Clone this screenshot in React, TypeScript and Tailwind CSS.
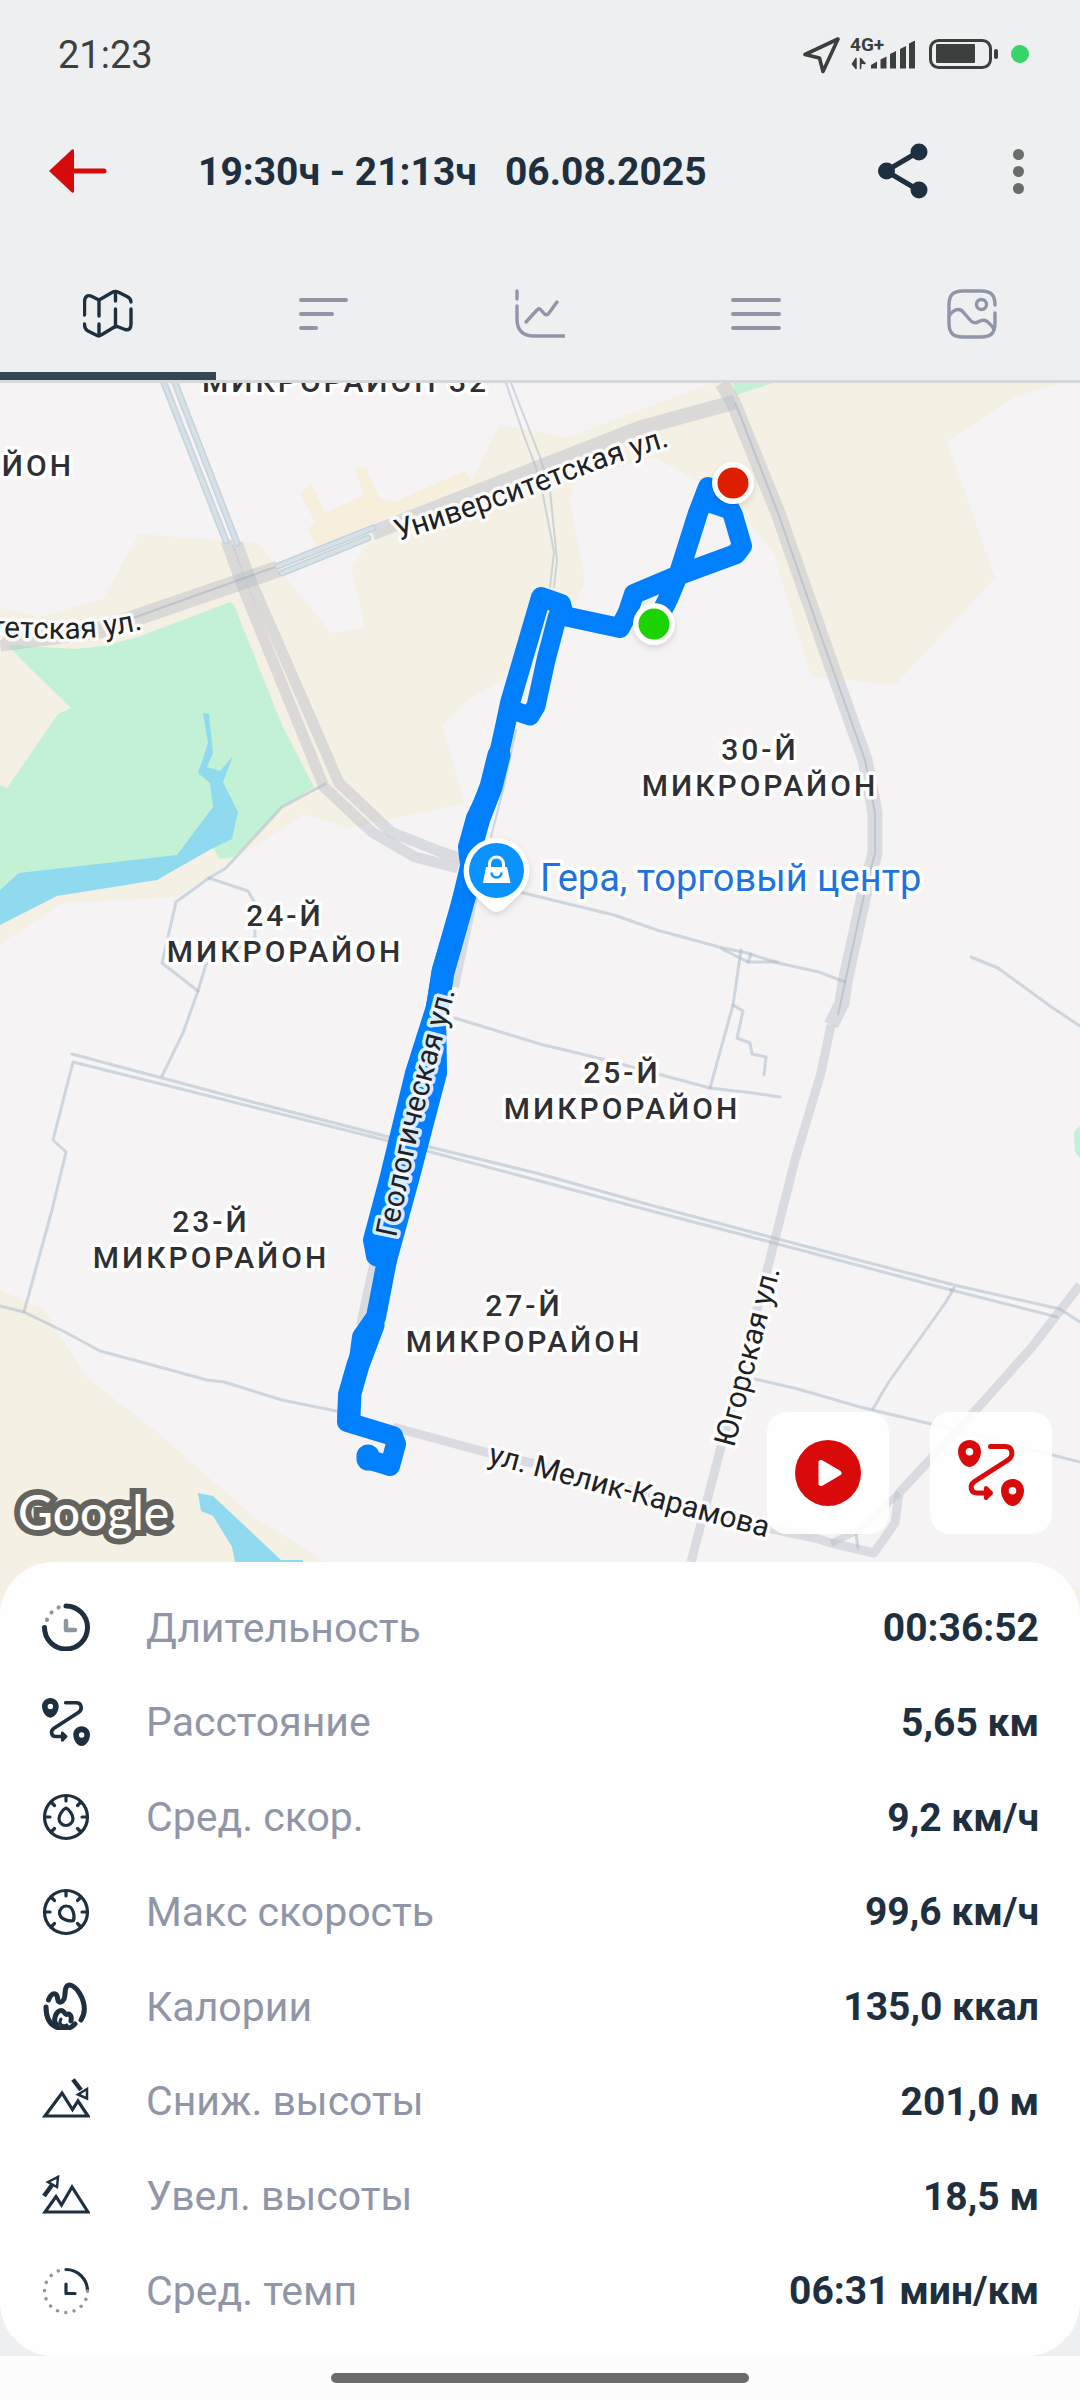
import { useState } from 'react';
import type { FC, ReactNode } from 'react';

interface IconProps {
  className?: string;
}

const StatusIcons: FC<IconProps> = ({ className }) => (
  <svg className={className} viewBox="0 0 226 48" fill="currentColor">
    <path d="M2 24.5 35 9 20 41.5 16.5 28Z" fill="none" stroke="currentColor" strokeWidth="3.6" strokeLinejoin="round" />
    <text className="text-[19px] font-bold" x="47" y="21">4G+</text>
    <path d="M53 28.5V38.5L49.5 34ZM57.5 38.5V28.5L62 33.5 58 33Z" stroke="currentColor" strokeWidth="1.5" strokeLinejoin="round" />
    <path d="M68 38.5V35L74 31.5V38.5ZM77.5 38.5V29.5L83.5 26.5V38.5ZM87 38.5V24L93 21V38.5ZM97 38.5V19L103 16V38.5ZM106 38.5V13.5L112 10.5V38.5Z" />
    <rect x="127.5" y="10.5" width="60" height="27" rx="8" fill="none" stroke="currentColor" strokeWidth="3" />
    <rect x="133" y="14" width="39" height="19" rx="1" />
    <rect x="191" y="19" width="4" height="10" rx="2" />
    <circle cx="217" cy="24" r="9" fill="#36d469" />
  </svg>
);

const BackIcon: FC<IconProps> = ({ className }) => (
  <svg className={className} viewBox="0 0 60 48" fill="#d60a0a">
    <path d="M1 24 24 2.5Q26 1.5 26 4V44Q26 46.5 24 45.5Z" />
    <path d="M24 24H56" stroke="#d60a0a" strokeWidth="5" strokeLinecap="round" />
  </svg>
);

const ShareIcon: FC<IconProps> = ({ className }) => (
  <svg className={className} viewBox="0 0 56 56" fill="currentColor">
    <path d="M43 8.5 10 28 43 47.5" fill="none" stroke="currentColor" strokeWidth="5" />
    <circle cx="43" cy="9" r="8.5" />
    <circle cx="10.5" cy="28" r="8.5" />
    <circle cx="43" cy="47" r="8.5" />
  </svg>
);

const RouteIcon: FC<IconProps> = ({ className }) => (
  <svg className={className} viewBox="0 0 66 66" fill="currentColor" stroke="none">
    <path fillRule="evenodd" d="M11.5 0C18 0 23 5 23 11.5 23 18 18 27 11.5 27S0 18 0 11.5C0 5 5 0 11.5 0Zm0 8a3.8 3.8 0 1 0 0 7.6 3.8 3.8 0 0 0 0-7.6Z" />
    <path fillRule="evenodd" d="M54.5 39C61 39 66 44 66 50.5 66 57 61 66 54.5 66S43 57 43 50.5C43 44 48 39 54.5 39Zm0 8a3.8 3.8 0 1 0 0 7.6 3.8 3.8 0 0 0 0-7.6Z" />
    <path d="M32.5 6.5H47C55 6.5 56 16 50 20L16.5 41.5C11 45.5 12.5 53 19 53H28" fill="none" stroke="currentColor" strokeWidth="5" strokeLinecap="round" />
    <path d="M28 48 33 53 28 58Z" stroke="currentColor" strokeWidth="4" strokeLinejoin="round" />
  </svg>
);

const tabs: { id: string; label: string; icon: ReactNode }[] = [
  {
    id: 'map',
    label: 'Карта',
    icon: (
      <>
        <path d="M1.5 26V13C1.5 7 5 5.5 9 7.5L16 11 29 3.5Q32 1.5 35 3L44 7.5Q48 9.5 48 13" />
        <path d="M48 20V35Q48 42 42 40.5L33 37 19 45.5Q16 47.5 13 46L5 42Q1.5 40 1.5 35" />
        <path d="M16 11V27M16 35V47M32.5 3V12M32.5 20V38" />
      </>
    ),
  },
  { id: 'laps', label: 'Отрезки', icon: <path strokeWidth="4" d="M2 11H47M2 25H33M2 39H17" /> },
  {
    id: 'chart',
    label: 'График',
    icon: (
      <>
        <path d="M2 2V10M2 17V30Q2 47 19 47H49" />
        <path d="M11 33 22 21Q24 18.5 26 21L29.5 25Q32 27 34 24L42 13" />
      </>
    ),
  },
  { id: 'list', label: 'Список', icon: <path strokeWidth="4" d="M2 11H48M2 25H48M2 39H48" /> },
  {
    id: 'photo',
    label: 'Фото',
    icon: (
      <>
        <path d="M48 16C48 6 44 2 34 2H16C6 2 2 6 2 16V34C2 44 6 48 16 48H34C44 48 48 44 48 34V24" />
        <circle cx="34.5" cy="15.5" r="5" />
        <path d="M2 27C7 20 13 18 17 24L24 32Q28 35 31 33C38 29 41 32 47 40" />
      </>
    ),
  },
];

const gaugeFace = (
  <>
    <circle cx="24" cy="24" r="21.5" />
    <path d="M24 3V8M45 24H40M3 24H8M39 9 35.5 12.5M9 9 12.5 12.5M39 39 35.5 35.5M9 39 12.5 35.5" />
  </>
);

const stats: { label: string; value: string; icon: ReactNode }[] = [
  {
    label: 'Длительность',
    value: '00:36:52',
    icon: (
      <>
        <path d="M24 3A21.5 21.5 0 1 1 2.5 24.5" strokeWidth="5" />
        <path d="M5 16.5V17M9.5 9.5 9.6 9.4M16.5 4.5 16.7 4.4" stroke="#8d959e" strokeWidth="4" />
        <path d="M24 18V27H33" stroke="#8d959e" strokeWidth="4.5" />
      </>
    ),
  },
  { label: 'Расстояние', value: '5,65 км', icon: <RouteIcon className="w-12 h-12" /> },
  {
    label: 'Сред. скор.',
    value: '9,2 км/ч',
    icon: (
      <>
        {gaugeFace}
        <path d="M24 15C27 16 31 22 31 25.5A7 7 0 0 1 17 25.5C17 22 21 16 24 15Z" />
      </>
    ),
  },
  {
    label: 'Макс скорость',
    value: '99,6 км/ч',
    icon: (
      <>
        {gaugeFace}
        <path d="M31.5 32.5C27 34 17.5 31 17.5 25A7 7 0 0 1 25 18C31 18 33 28 31.5 32.5Z" />
      </>
    ),
  },
  {
    label: 'Калории',
    value: '135,0 ккал',
    icon: (
      <>
        <path d="M6.5 18C10 9 15 11 15.5 16 16 22 20 21 22 17 24 13 22 7 25 4 28 1 34 5 38 12 43 21 44 30 39 38" strokeWidth="5" />
        <path d="M4 25C4 35 7 42 14 45 21 48 29 47 33 42" strokeWidth="5" />
        <path d="M15 43C10 39 14 29 19 28.5 22 28 22 32 24.5 32.5 28 31 30 34 29 39" strokeWidth="5" />
        <path d="M19 37C16 42 20 45 25 43" strokeWidth="3" />
      </>
    ),
  },
  {
    label: 'Сниж. высоты',
    value: '201,0 м',
    icon: (
      <g strokeLinecap="butt" strokeLinejoin="miter">
        <path d="M3 39H46L36 24 30.5 32.5 20 16Z" />
        <path d="M31 2.5 39 13" strokeWidth="4.5" />
        <path d="M36 17.5 45 12V21.5Z" strokeWidth="2.5" />
      </g>
    ),
  },
  {
    label: 'Увел. высоты',
    value: '18,5 м',
    icon: (
      <g strokeLinecap="butt" strokeLinejoin="miter">
        <path d="M3 40H46L30 15 19.5 33 14 24.5Z" />
        <path d="M2 24 10 13" strokeWidth="4.5" />
        <path d="M6 10 16 5 15 15Z" strokeWidth="2.5" />
      </g>
    ),
  },
  {
    label: 'Сред. темп',
    value: '06:31 мин/км',
    icon: (
      <>
        <path d="M24 2.5A21.5 21.5 0 0 1 45.5 24" />
        <path d="M45.5 24A21.5 21.5 0 1 1 24 2.5" stroke="#8d959e" strokeWidth="3.4" strokeDasharray="0.1 8.34" strokeDashoffset="-8.4" />
        <path d="M24 17V26.5H33" />
      </>
    ),
  },
];

const districts = [
  { name: '30-Й', x: 760, y: 760 },
  { name: '24-Й', x: 285, y: 926 },
  { name: '25-Й', x: 622, y: 1083 },
  { name: '23-Й', x: 211, y: 1232 },
  { name: '27-Й', x: 524, y: 1316 },
];

const minorRoads = [
  '72,1054 241,1099 389,1137 540,1174 643,1203 774,1238 954,1285 1060,1309 1080,1322',
  '951,1290 774,1243 640,1208 540,1181 389,1141 73,1062 53,1140 66,1152 52,1210 24,1312',
  '951,1290 1057,1317',
  '325,784 282,807 226,868 209,878 176,902 162,963 198,991',
  '209,878 248,891 255,903 255,937 238,948 206,964 198,991 183,1033 162,1076',
  '516,891 540,897 614,915 657,930 719,947 747,953 778,963 819,972 845,982',
  '722,949 748,962 778,962',
  '741,950 733,1005 710,1088',
  '733,1005 743,1011 737,1038 750,1043 752,1054 766,1057 764,1075',
  '751,954 748,962',
  '455,1018 540,1044 602,1059 710,1088 753,1093 780,1097',
  '971,957 998,968 1050,1006 1080,1026',
  '0,1306 24,1312 65,1332 100,1351 145,1363 207,1380 224,1382 282,1400 336,1411',
  '755,1379 798,1389 860,1407 931,1424 1080,1462',
  '873,1409 888,1383 946,1302 954,1288',
  '856,1533 858,1548',
];

const RouteMap: FC = () => (
  <svg className="block w-full h-auto" viewBox="0 383 1080 1233" role="img" aria-label="Карта маршрута">
    <rect y="383" width="1080" height="1233" fill="#f5f3f4" />

    {/* Land use */}
    <g fill="#f4f0e4">
      <path d="M0 608 40 617 103 599 139 534 257 543 265 552 331 633 365 628 352 569 365 547 400 510 473 480 499 425 540 432 566 438 712 383H1060L1015 397 947 441 995 578 895 685 811 676 774 555 748 520 697 480 654 457 576 480 569 497 585 581 560 640 509 675 468 700 442 725 461 790 465 803 350 828 304 814 230 862 177 897 62 903 0 944Z" />
      <path d="M0 1290 45 1310 57 1330 86 1377 158 1433 255 1518 327 1562V1616H0Z" />
      <path d="M1068 1583 1080 1590V1616H1068Z" />
    </g>
    <path fill="#f7efdc" d="M300 493 312 484 325 513 364 495 355 468H366L379 498 394 502 465 471 473 482 316 547 308 528 316 524Z" />
    <g fill="#c3f1d5">
      <path d="M7 645 76 649 103 646 138 637 230 602 234 605 282 725 314 787 282 807 234 857 220 859 213 848 150 870 0 910V785L7 788 58 714 71 708 34 672Z" />
      <path d="M733 383H773L736 395Z" />
      <path d="M1080 1126 1074 1132 1075 1152 1080 1158Z" />
    </g>
    <g fill="#8fdaee">
      <path d="M203 713 209 714 213 753 207 767 220 771 233 756 223 782 238 812 232 839 213 848 157 880 57 896 0 925V890L19 873 177 855 213 807 210 783 198 773 208 743Z" />
      <path d="M198 1493 213 1496 281 1560H303V1562H235L232 1547 213 1516 201 1511Z" />
    </g>

    {/* Roads */}
    <g fill="none" stroke="#a8b8c8" strokeOpacity="0.5" strokeWidth="3" strokeLinecap="round" strokeLinejoin="round">
      {minorRoads.map((points) => (
        <polyline key={points} points={points} />
      ))}
      <path strokeWidth="2" d="M506 383 523 433 535 465 542 490 554 552 550 587M511 383 540 457 550 490 557 560 554 587M516 730 503 790 491 837" />
    </g>
    <g fill="none" stroke="#b4bac6" strokeOpacity="0.42" strokeLinejoin="round">
      <path strokeWidth="11" d="M226 541 241 583 324 787 372 832 415 857 458 868" />
      <path strokeWidth="11" d="M237 543 252 583 339 783 391 832 441 852 460 858" />
      <path strokeWidth="17" d="M0 643 100 630 278 569" />
      <path strokeWidth="15" d="M372 533 540 467 640 428 735 402" />
      <path strokeWidth="15" d="M722 383 733 402 778 513 833 670 865 760 875 813V853L864 895 845 982 842 1003 831 1025" />
      <path strokeWidth="9" d="M831 1025 821 1073 795 1160 769 1263 721 1447 691 1562" />
      <path strokeWidth="9" d="M393 1427 496 1455 540 1465 767 1528 815 1538 831 1543 874 1553 895 1523 899 1493 976 1410 1032 1347 1080 1285" />
      <path strokeWidth="7" d="M899 1493 860 1530 831 1543" />
      <path strokeWidth="8" d="M484 850 455 987M373 1265 360 1325" />
      <path stroke="#9aa6ba" strokeWidth="2" d="M735 402 778 513 833 670 865 760 875 813V853L864 895 838 1015M133 618 278 566" />
    </g>
    <g fill="none" strokeLinecap="round">
      <path stroke="#c6d2db" strokeWidth="7" d="M164 383 226 541M175 383 237 543M278 566 373 528M282 573 368 538" />
      <path stroke="#d6e0e7" strokeWidth="4" d="M164 383 226 541M175 383 237 543M278 566 373 528M282 573 368 538" />
    </g>

    {/* District labels */}
    <g className="font-medium text-[30px] tracking-widest" fill="#2f3033" stroke="#fff" strokeWidth="7" strokeLinejoin="round" paintOrder="stroke">
      <text x="202" y="392">МИКРОРАЙОН 32</text>
      <text x="74" y="476" textAnchor="end">МИКРОРАЙОН</text>
      {districts.map((d) => (
        <text key={d.name} textAnchor="middle" y={d.y}>
          <tspan x={d.x}>{d.name}</tspan>
          <tspan x={d.x} dy="36">МИКРОРАЙОН</tspan>
        </text>
      ))}
    </g>

    {/* Recorded track */}
    <g fill="none" stroke="#0080ff" strokeWidth="20" strokeLinecap="round" strokeLinejoin="round">
      <path d="M660 615 669 597 679 573 698 513 708 487 725 500 733 515 742 546 736 554 679 575 634 594 628 612 620 628 564 616 561 604 541 597 510 703 505 727 492 785 476 818 468 847 470 866 459 913 442 970 436 1007 415 1073 389 1180 373 1240 376 1256 387 1260 376 1317 362 1337 358 1367 348 1395 347 1422 393 1436 396 1444 390 1466 370 1460" />
      <path strokeWidth="19" d="M561 608 557 618 546 660 536 706 530 716 512 710" />
      <path d="M436 1007 437 1073 409 1180 387 1260" />
      <path strokeWidth="23" d="M499 755 491 787 479 818 471 847M469 880 459 916 443 972 437 1010M427 1050 398 1180M373 1325 358 1365 350 1393 349 1417M708 492 716 502" />
      <path strokeWidth="17" d="M398 1180 384 1238M706 503 724 509" />
      <path strokeWidth="23" d="M368 1456 368 1459" />
    </g>

    {/* Street names */}
    <defs>
      <path id="street-west" d="M-150 625Q-40 637 60 639 105 639 143 629" />
      <path id="street-north" d="M398 541Q485 513 555 486 615 462 690 440" />
      <path id="street-geo" d="M396 1238 420 1124Q436 1064 458 980" />
      <path id="street-ugra" d="M734 1448 782 1262" />
      <path id="street-melik" d="M487 1463 780 1541" />
    </defs>
    <g className="text-[30px]" fill="#202124" stroke="#fff" strokeWidth="7" strokeOpacity="0.85" strokeLinejoin="round" paintOrder="stroke">
      <text textAnchor="end"><textPath href="#street-west" startOffset="100%">Университетская ул.</textPath></text>
      <text><textPath href="#street-north">Университетская ул.</textPath></text>
      <text><textPath href="#street-geo">Геологическая ул.</textPath></text>
      <text><textPath href="#street-ugra">Югорская ул.</textPath></text>
      <text><textPath href="#street-melik">ул. Мелик-Карамова</textPath></text>
    </g>
    <text className="text-[38px]" x="540" y="891" fill="#1f73de" stroke="#fff" strokeWidth="7" strokeLinejoin="round" paintOrder="stroke">
      Гера, торговый центр
    </text>

    {/* Markers */}
    <g className="drop-shadow-md">
      <circle cx="654" cy="624" r="21" fill="#fff" />
      <circle cx="733" cy="483" r="21" fill="#fff" />
      <path fill="#fff" d="M496.5 838A33 33 0 0 1 520 894L504 909Q496.5 915 489 909L473 894A33 33 0 0 1 496.5 838Z" />
    </g>
    <circle cx="654" cy="624" r="15.5" fill="#1bd300" />
    <circle cx="733" cy="483" r="15.5" fill="#dd1f00" />
    <circle cx="496.5" cy="870.5" r="27.5" fill="#0a93ff" />
    <path fill="#fff" d="M486 867H507L510.5 883H483Z" />
    <path fill="none" stroke="#fff" strokeWidth="3" d="M489.5 868V864A7 7 0 0 1 503.5 864V868" />
    <path fill="none" stroke="#0a93ff" strokeWidth="2.5" d="M491.5 872.5A5 5 0 0 0 501.5 872.5" />

    <text className="font-[Lato,sans-serif] text-[48px] font-medium" x="18" y="1530" fill="#fff" stroke="#64635d" strokeWidth="12" paintOrder="stroke">
      Google
    </text>
  </svg>
);

const App: FC = () => {
  const [activeTab, setActiveTab] = useState('map');

  return (
    <div className="min-h-screen flex flex-col bg-[#edeff1] text-[#1e2f3f] font-[Roboto,sans-serif]">
      {/* Status bar */}
      <div className="h-[108px] pl-[58px] pr-[51px] flex items-center justify-between text-[#3d3f3e]">
        <span className="pt-0.5 text-[38px]">21:23</span>
        <StatusIcons className="w-[226px] h-12" />
      </div>

      {/* Toolbar */}
      <header className="h-[126px] pl-12 pr-[54px] flex items-center">
        <button type="button" aria-label="Назад">
          <BackIcon className="w-[60px] h-12" />
        </button>
        <h1 className="flex-1 pl-[90px] pt-0.5 flex gap-7 text-[39px] font-bold whitespace-nowrap">
          <span>19:30ч - 21:13ч</span>
          <span>06.08.2025</span>
        </h1>
        <button type="button" aria-label="Поделиться" className="mr-[79px]">
          <ShareIcon className="w-14 h-14" />
        </button>
        <button type="button" aria-label="Ещё" className="flex flex-col gap-1.5 px-0.5">
          <span className="size-[11px] rounded-full bg-[#6b6c6c]" />
          <span className="size-[11px] rounded-full bg-[#6b6c6c]" />
          <span className="size-[11px] rounded-full bg-[#6b6c6c]" />
        </button>
      </header>

      {/* Tabs */}
      <div role="tablist" className="mt-3.5 grid grid-cols-5 border-b-[3px] border-[#d6d9d9]">
        {tabs.map((tab) => (
          <button
            key={tab.id}
            type="button"
            role="tab"
            aria-label={tab.label}
            aria-selected={activeTab === tab.id}
            onClick={() => setActiveTab(tab.id)}
            className={`h-[132px] flex items-center justify-center border-y-8 border-t-transparent ${activeTab === tab.id ? 'border-b-[#354556] text-[#1e2f3f]' : 'border-b-transparent text-[#9096a8]'}`}
          >
            <svg className="w-[50px] h-[50px]" viewBox="0 0 50 50" fill="none" stroke="currentColor" strokeWidth="3.4" strokeLinecap="round" strokeLinejoin="round">
              {tab.icon}
            </svg>
          </button>
        ))}
      </div>

      {/* Map */}
      <div className="relative">
        <RouteMap />
        <div className="absolute right-7 bottom-[82px] flex gap-[41px] text-[#d90a0a]">
          <button type="button" aria-label="Воспроизвести" className="size-[122px] flex items-center justify-center rounded-[20px] bg-white/90">
            <svg className="w-[66px] h-[66px]" viewBox="0 0 66 66">
              <circle cx="33" cy="33" r="33" fill="currentColor" />
              <path d="M26 22.5V43.5L44 33Z" fill="#fff" stroke="#fff" strokeWidth="5" strokeLinejoin="round" />
            </svg>
          </button>
          <button type="button" aria-label="Маршрут" className="size-[122px] flex items-center justify-center rounded-[20px] bg-white/90">
            <RouteIcon className="w-[66px] h-[66px]" />
          </button>
        </div>
      </div>

      {/* Workout stats */}
      <dl className="relative -mt-[54px] flex-1 grid auto-rows-fr pt-[18px] pb-[18px] pl-[42px] pr-[41px] rounded-[54px] bg-[#fefefe]">
        {stats.map((stat) => (
          <div key={stat.label} className="flex items-center">
            <svg className="w-12 h-12" viewBox="0 0 48 48" fill="none" stroke="currentColor" strokeWidth="3.2" strokeLinecap="round" strokeLinejoin="round" aria-hidden="true">
              {stat.icon}
            </svg>
            <dt className="flex-1 pl-14 pt-0.5 text-[41px] text-[#9096a8]">{stat.label}</dt>
            <dd className="pt-0.5 text-[39px] font-bold">{stat.value}</dd>
          </div>
        ))}
      </dl>

      <div className="h-11 flex items-center justify-center bg-[#fcfcfc]">
        <div className="w-[418px] h-2.5 rounded-full bg-[#6b6b6b]" />
      </div>
    </div>
  );
};

export default App;
